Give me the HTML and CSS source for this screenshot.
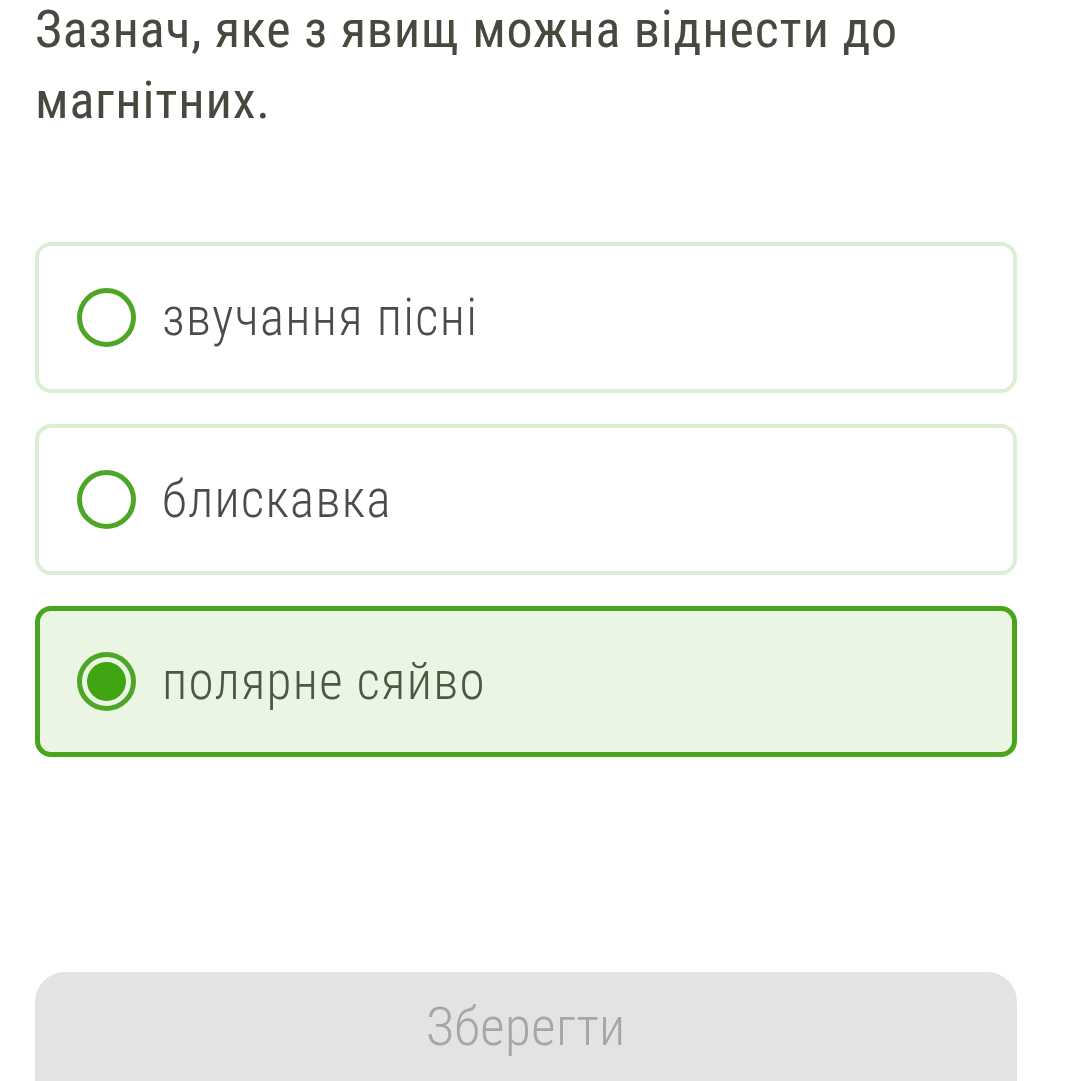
FILE: index.html
```html
<!DOCTYPE html>
<html lang="uk">
<head>
  <meta charset="UTF-8">
  <meta name="viewport" content="width=device-width, initial-scale=1.0">
  <title>Тест</title>
  <link rel="stylesheet" href="styles.css">
</head>
<body>
  <div class="task">
    <h1 class="question">Зазнач, яке з явищ можна віднести до магнітних.</h1>

    <form class="answers">
      <label class="answer">
        <input type="radio" name="a" value="1">
        <span class="radio"></span>
        <span class="answer-text">звучання пісні</span>
      </label>
      <label class="answer">
        <input type="radio" name="a" value="2">
        <span class="radio"></span>
        <span class="answer-text">блискавка</span>
      </label>
      <label class="answer">
        <input type="radio" name="a" value="3" checked>
        <span class="radio"></span>
        <span class="answer-text">полярне сяйво</span>
      </label>
    </form>

    <button type="button" class="save" disabled>Зберегти</button>
  </div>
</body>
</html>
```

FILE: styles.css
```css
body {
  margin: 0;
  background: #fff;
  font-family: Roboto, "Noto Sans", sans-serif;
  font-stretch: 80%;
  overflow: hidden;
}
.task {
  padding: 0 49px 0 35px;
}
.question {
  margin: -6px 0 0;
  font-size: 52px;
  font-weight: 400;
  line-height: 71px;
  letter-spacing: 0.8px;
  color: #47483e;
}
.answers {
  margin-top: 106px;
  display: flex;
  flex-direction: column;
  gap: 31px;
}
.answer {
  display: flex;
  align-items: center;
  height: 151px;
  box-sizing: border-box;
  padding-left: 38px;
  border: 4px solid #dcefd2;
  border-radius: 16px;
  background: #fff;
  cursor: pointer;
}
.answer input {
  display: none;
}
.radio {
  width: 59px;
  height: 59px;
  box-sizing: border-box;
  border: 5px solid #4ea626;
  border-radius: 50%;
  flex-shrink: 0;
  position: relative;
}
.answer-text {
  margin-left: 26px;
  font-size: 51px;
  font-weight: 300;
  letter-spacing: 1.3px;
  color: #4b4b47;
}
.answer:has(input:checked) {
  border: 5px solid #4aa51c;
  padding-left: 37px;
  background: #eaf6e3;
}
.answer:has(input:checked) .answer-text {
  color: #4c5844;
}
.answer input:checked + .radio::after {
  content: "";
  position: absolute;
  inset: 5px;
  border-radius: 50%;
  background: #3fa512;
}
.save {
  display: block;
  width: 100%;
  height: 140px;
  margin-top: 215px;
  border: none;
  border-radius: 30px;
  background: #e3e3e3;
  color: #a6a6a6;
  font-family: Roboto, "Noto Sans", sans-serif;
  font-stretch: 80%;
  font-size: 53px;
  font-weight: 300;
  letter-spacing: 0.5px;
  padding-bottom: 32px;
}
```
